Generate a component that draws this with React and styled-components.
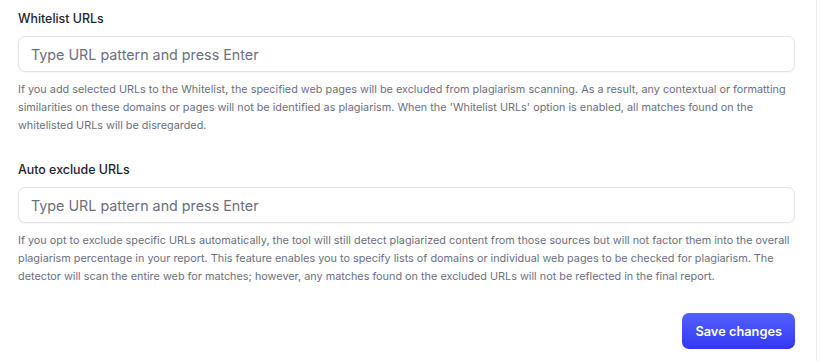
import React from 'react';
import styled, { createGlobalStyle } from 'styled-components';

const GlobalStyle = createGlobalStyle`
  body {
    margin: 0;
    background: #ffffff;
    font-family: Inter, "Noto Sans", sans-serif;
  }
`;

const Page = styled.div`
  display: flex;
  min-height: 361px;
`;

const Panel = styled.div`
  width: 817px;
  box-sizing: border-box;
  border-right: 1px solid #ededf0;
  padding: 10px 21px 12px 18px;
`;

const Field = styled.div`
  display: flex;
  flex-direction: column;
  margin-bottom: ${(p) => p.gap || 0}px;
`;

const Label = styled.label`
  font-size: 12.4px;
  line-height: 18px;
  font-weight: 500;
  color: #1f2430;
  margin-bottom: 8px;
`;

const Input = styled.input`
  box-sizing: border-box;
  height: 36px;
  width: 100%;
  border: 1px solid #e2e4e9;
  border-radius: 7px;
  padding: 0 12px;
  font-family: Inter, "Noto Sans", sans-serif;
  font-size: 14.3px;
  color: #1f2430;
  outline: none;
  box-shadow: 0 1px 2px rgba(16, 24, 40, 0.04);

  &::placeholder {
    color: #6b7080;
  }
`;

const Help = styled.p`
  margin: 8px 0 0;
  font-size: 10.85px;
  line-height: 18px;
  color: #6b7080;
`;

const Footer = styled.div`
  display: flex;
  justify-content: flex-end;
  margin-top: 28px;
`;

const SaveButton = styled.button`
  height: 36px;
  padding: 0 13px;
  border: none;
  border-radius: 7px;
  background: linear-gradient(180deg, #5262ff 0%, #3537f4 100%);
  color: #ffffff;
  font-family: Inter, "Noto Sans", sans-serif;
  font-size: 12.8px;
  font-weight: 600;
  cursor: pointer;
`;

const App = () => (
  <Page>
    <GlobalStyle />
    <Panel>
      <Field gap={27}>
        <Label>Whitelist URLs</Label>
        <Input placeholder="Type URL pattern and press Enter" />
        <Help>
          If you add selected URLs to the Whitelist, the specified web pages will be excluded from plagiarism scanning. As a result, any contextual or formatting similarities on these domains or pages will not be identified as plagiarism. When the 'Whitelist URLs' option is enabled, all matches found on the whitelisted URLs will be disregarded.
        </Help>
      </Field>
      <Field>
        <Label>Auto exclude URLs</Label>
        <Input placeholder="Type URL pattern and press Enter" />
        <Help>
          If you opt to exclude specific URLs automatically, the tool will still detect plagiarized content from those sources but will not factor them into the overall plagiarism percentage in your report. This feature enables you to specify lists of domains or individual web pages to be checked for plagiarism. The detector will scan the entire web for matches; however, any matches found on the excluded URLs will not be reflected in the final report.
        </Help>
      </Field>
      <Footer>
        <SaveButton>Save changes</SaveButton>
      </Footer>
    </Panel>
  </Page>
);

export default App;
